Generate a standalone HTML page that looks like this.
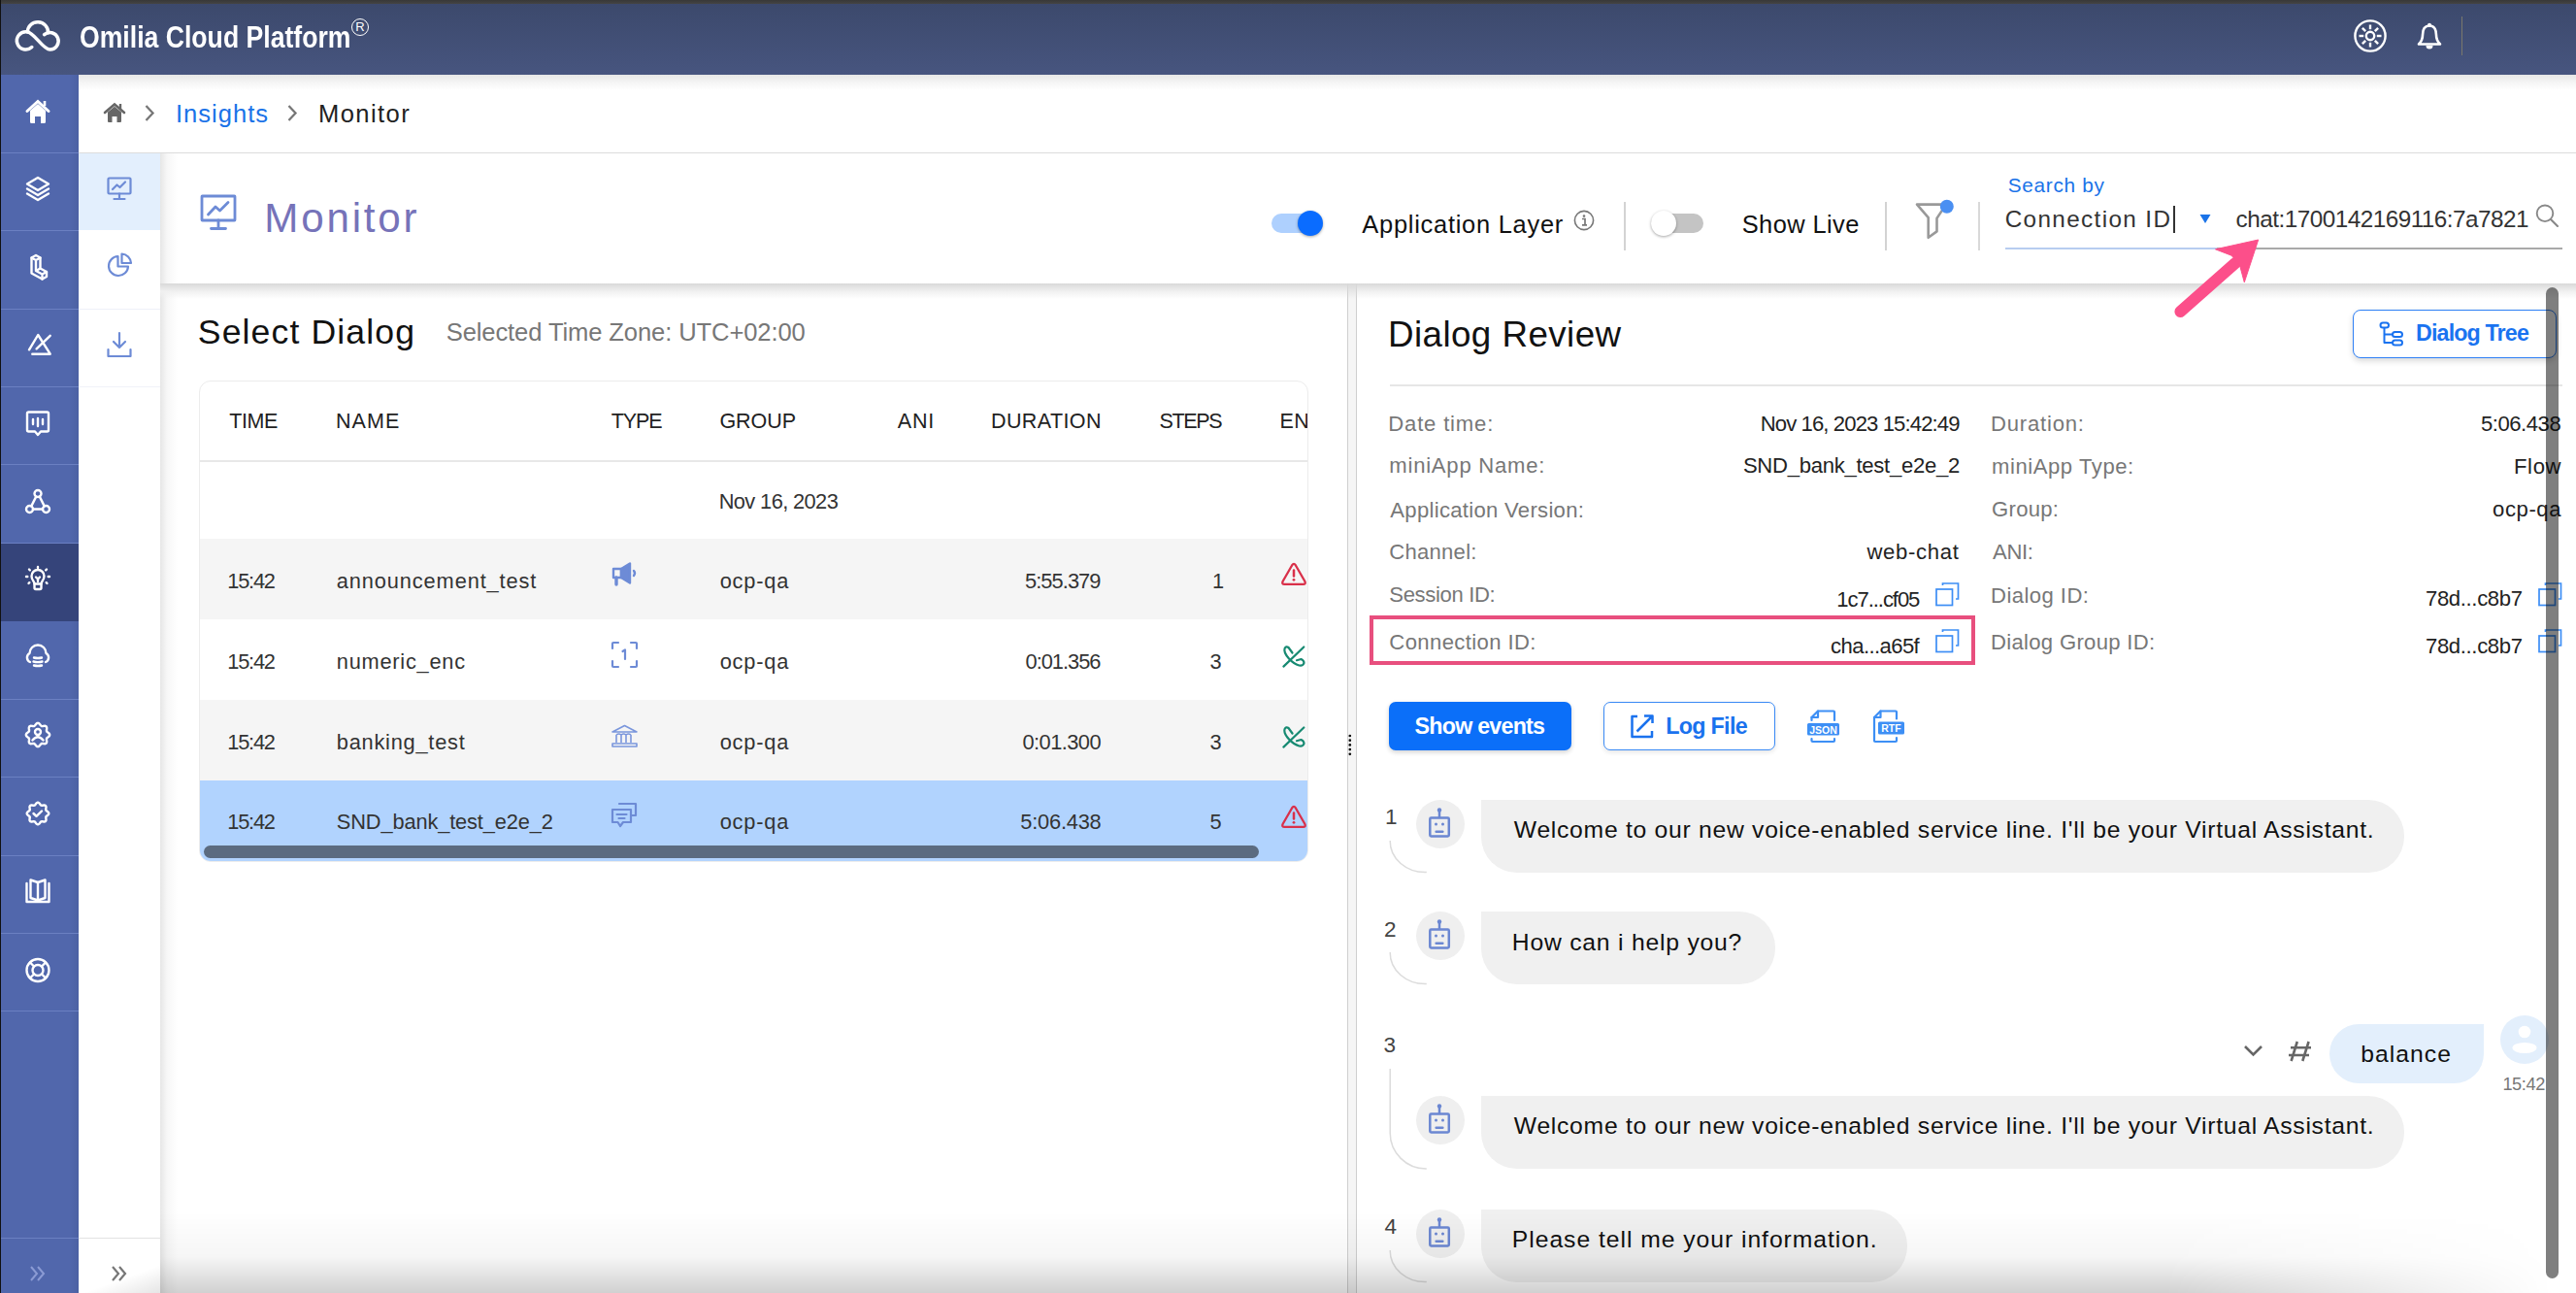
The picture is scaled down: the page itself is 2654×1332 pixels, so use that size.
<!DOCTYPE html>
<html><head><meta charset="utf-8"><title>Omilia Cloud Platform - Monitor</title>
<style>
html,body{margin:0;padding:0;}
body{width:2654px;height:1332px;position:relative;overflow:hidden;background:#fff;font-family:"Liberation Sans",sans-serif;}
.b,.t,.ic{position:absolute;}
.t{white-space:pre;line-height:1;z-index:10}
.ic{z-index:5;overflow:visible}
</style></head><body>
<div class="b" style="left:0;top:0;width:2654px;height:4px;background:linear-gradient(#383838,#444)"></div>
<div class="b" style="left:0;top:4px;width:2654px;height:73px;background:linear-gradient(#3c496c,#47557f)"></div>
<div class="b" style="left:0;top:0;width:1px;height:1332px;background:#111"></div>
<svg class="ic" style="left:0px;top:0px;" width="70" height="60" viewBox="0 0 70 60"><g fill="none" stroke="#fff" stroke-width="3.5" stroke-linecap="round"><path d="M32.8 48.5 A9.15 9.15 0 1 1 27.6 32.75 C 35 32.75, 44 51.05, 51.45 51.05 A8.8 8.8 0 1 0 45.6 35.6"/><path d="M28.3 33 A10.4 10.4 0 0 1 49.6 33.8"/></g></svg>
<div class="t" style="left:362px;top:19px;width:18px;height:18px;border:1.6px solid #fff;border-radius:50%;box-sizing:border-box;color:#fff;font-size:13px;line-height:15px;text-align:center">R</div>
<svg class="ic" style="left:2425px;top:19.5px;" width="34" height="34" viewBox="0 0 34 34"><g fill="none" stroke="#fff" stroke-width="2.4"><circle cx="17" cy="17" r="15.6"/><circle cx="17" cy="17" r="4.2"/><line x1="23.80" y1="17.00" x2="28.50" y2="17.00"/><line x1="21.81" y1="21.81" x2="25.13" y2="25.13"/><line x1="17.00" y1="23.80" x2="17.00" y2="28.50"/><line x1="12.19" y1="21.81" x2="8.87" y2="25.13"/><line x1="10.20" y1="17.00" x2="5.50" y2="17.00"/><line x1="12.19" y1="12.19" x2="8.87" y2="8.87"/><line x1="17.00" y1="10.20" x2="17.00" y2="5.50"/><line x1="21.81" y1="12.19" x2="25.13" y2="8.87"/></g></svg>
<svg class="ic" style="left:2490px;top:23px;" width="26" height="28" viewBox="0 0 26 28"><g fill="none" stroke="#fff" stroke-width="2.6" stroke-linejoin="round"><path d="M13 3.5 C 7 3.5, 6 9, 6 13 C 6 17, 5 19.5, 2 22.5 L 24 22.5 C 21 19.5, 20 17, 20 13 C 20 9, 19 3.5, 13 3.5 Z"/></g><circle cx="13" cy="2.8" r="2" fill="#fff"/><path d="M9.5 24 A3.5 3.5 0 0 0 16.5 24 Z" fill="#fff"/></svg>
<div class="b" style="left:2536px;top:17px;width:1px;height:40px;background:#7a786c"></div>
<div class="b" style="left:1px;top:77px;width:80px;height:1255px;background:linear-gradient(90deg,#5167ac 0,#5167ac 88%,#4c61a3 100%)"></div>
<div class="b" style="left:1px;top:560px;width:80px;height:80px;background:#35447a"></div>
<div class="b" style="left:1px;top:157px;width:80px;height:1px;background:#6b80c2"></div>
<div class="b" style="left:1px;top:237px;width:80px;height:1px;background:#6b80c2"></div>
<div class="b" style="left:1px;top:318px;width:80px;height:1px;background:#6b80c2"></div>
<div class="b" style="left:1px;top:398px;width:80px;height:1px;background:#6b80c2"></div>
<div class="b" style="left:1px;top:478px;width:80px;height:1px;background:#6b80c2"></div>
<div class="b" style="left:1px;top:559px;width:80px;height:1px;background:#6b80c2"></div>
<div class="b" style="left:1px;top:720px;width:80px;height:1px;background:#6b80c2"></div>
<div class="b" style="left:1px;top:800px;width:80px;height:1px;background:#6b80c2"></div>
<div class="b" style="left:1px;top:881px;width:80px;height:1px;background:#6b80c2"></div>
<div class="b" style="left:1px;top:961px;width:80px;height:1px;background:#6b80c2"></div>
<div class="b" style="left:1px;top:1041px;width:80px;height:1px;background:#6b80c2"></div>
<div class="b" style="left:1px;top:1275px;width:80px;height:1px;background:#6b80c2"></div>
<svg class="ic" style="left:26px;top:102px;" width="26" height="26" viewBox="0 0 26 26"><path d="M2 12.5 L13 2.5 L24 12.5" fill="none" stroke="#fff" stroke-width="3" stroke-linecap="round"/><path d="M20 2 L20 7" stroke="#fff" stroke-width="2.6"/><path d="M5 12 L13 5 L21 12 L21 23.5 Q21 25 19.5 25 L16 25 L16 18 L10 18 L10 25 L6.5 25 Q5 25 5 23.5 Z" fill="#fff"/></svg>
<svg class="ic" style="left:26px;top:181px;" width="26" height="26" viewBox="0 0 26 26"><g fill="none" stroke="#fff" stroke-width="2.4" stroke-linecap="round" stroke-linejoin="round"><path d="M13 2 L24 8.5 L13 15 L2 8.5 Z"/><path d="M2 13.5 L13 20 L24 13.5"/><path d="M2 18.5 L13 25 L24 18.5"/></g></svg>
<svg class="ic" style="left:30.5px;top:261.5px;" width="26" height="26" viewBox="0 0 26 26"><g fill="none" stroke="#fff" stroke-width="2.4" stroke-linecap="round" stroke-linejoin="round" stroke-width="2"><path d="M1.5 3.5 L6 1 L10.5 3.5 L10.5 14.5 L17 18 L17 23 L12.5 25.5 L1.5 19.5 Z"/><path d="M1.5 3.5 L6 6 L10.5 3.5 M6 6 L6 17 L12.5 20.5 L17 18 M12.5 20.5 L12.5 25.5 M6 17 L10.5 14.5"/></g></svg>
<svg class="ic" style="left:26px;top:342px;" width="26" height="26" viewBox="0 0 26 26"><g fill="none" stroke="#fff" stroke-width="2.4" stroke-linecap="round" stroke-linejoin="round" stroke-width="2.2"><path d="M4 18.3 L13.2 3 L25.7 22.7 L7.3 22.7"/><path d="M11.6 17.3 L25.7 3.8"/></g></svg>
<svg class="ic" style="left:27px;top:423px;" width="26" height="26" viewBox="0 0 26 26"><g fill="none" stroke="#fff" stroke-width="2.4" stroke-linecap="round" stroke-linejoin="round" stroke-width="2.2"><path d="M2.5 1.5 L21.5 1.5 Q23 1.5 23 3 L23 20 Q23 21.5 21.5 21.5 L15 21.5 L12 25 L9 21.5 L2.5 21.5 Q1 21.5 1 20 L1 3 Q1 1.5 2.5 1.5 Z"/><path d="M7 9 L7 14 M12 8 L12 16 M17 9 L17 14"/></g></svg>
<svg class="ic" style="left:26px;top:504px;" width="26" height="26" viewBox="0 0 26 26"><g fill="none" stroke="#fff" stroke-width="2.4" stroke-linecap="round" stroke-linejoin="round" stroke-width="2.2"><circle cx="13" cy="4.5" r="3.5"/><circle cx="4.5" cy="20.5" r="3.5"/><circle cx="21.5" cy="20.5" r="3.5"/><path d="M11.2 7.6 L6.3 17.4 M14.8 7.6 L19.7 17.4 M8 20.5 L18 20.5"/></g></svg>
<svg class="ic" style="left:26px;top:583px;" width="26" height="26" viewBox="0 0 26 26"><g fill="none" stroke="#fff" stroke-width="2.4" stroke-linecap="round" stroke-linejoin="round" stroke-width="2.2"><path d="M9.5 18.5 C 9.5 16, 6.5 14.5, 6.5 10.5 A6.5 6.5 0 0 1 19.5 10.5 C 19.5 14.5, 16.5 16, 16.5 18.5 Z"/><path d="M9.5 18.5 L9.5 22.5 Q9.5 24 11 24 L15 24 Q16.5 24 16.5 22.5 L16.5 18.5"/><path d="M11 11.5 L13 13.5 L15 11.5 M13 13.5 L13 16"/><path d="M13 1 L13 2 M4 3.5 L4.8 4.3 M22 3.5 L21.2 4.3 M1 11 L2.3 11 M25 11 L23.7 11 M3.5 18 L4.3 17.2 M22.5 18 L21.7 17.2"/></g></svg>
<svg class="ic" style="left:26px;top:665px;" width="26" height="26" viewBox="0 0 26 26"><g fill="none" stroke="#fff" stroke-width="2.4" stroke-linecap="round" stroke-linejoin="round" stroke-width="2.4"><path d="M5 17 A5 5 0 0 1 4.5 8 A8.5 8.5 0 0 1 21.5 8 A5 5 0 0 1 21 17"/><path d="M9 12.5 Q13 13.5 17 12.5 M8.5 16.5 Q13 17.8 17.5 16.5 M9 20.5 Q13 21.5 17 20.5"/></g></svg>
<svg class="ic" style="left:26px;top:744px;" width="26" height="26" viewBox="0 0 26 26"><g fill="none" stroke="#fff" stroke-width="2.4" stroke-linecap="round" stroke-linejoin="round" stroke-width="2.2"><path d="M13.00 0.80 L13.79 0.99 L14.51 1.50 L15.15 2.21 L15.69 2.95 L16.20 3.57 L16.75 3.95 L17.41 4.07 L18.20 3.99 L19.11 3.85 L20.06 3.80 L20.94 3.95 L21.63 4.37 L22.05 5.06 L22.20 5.94 L22.15 6.89 L22.01 7.80 L21.93 8.59 L22.05 9.25 L22.43 9.80 L23.05 10.31 L23.79 10.85 L24.50 11.49 L25.01 12.21 L25.20 13.00 L25.01 13.79 L24.50 14.51 L23.79 15.15 L23.05 15.69 L22.43 16.20 L22.05 16.75 L21.93 17.41 L22.01 18.20 L22.15 19.11 L22.20 20.06 L22.05 20.94 L21.63 21.63 L20.94 22.05 L20.06 22.20 L19.11 22.15 L18.20 22.01 L17.41 21.93 L16.75 22.05 L16.20 22.43 L15.69 23.05 L15.15 23.79 L14.51 24.50 L13.79 25.01 L13.00 25.20 L12.21 25.01 L11.49 24.50 L10.85 23.79 L10.31 23.05 L9.80 22.43 L9.25 22.05 L8.59 21.93 L7.80 22.01 L6.89 22.15 L5.94 22.20 L5.06 22.05 L4.37 21.63 L3.95 20.94 L3.80 20.06 L3.85 19.11 L3.99 18.20 L4.07 17.41 L3.95 16.75 L3.57 16.20 L2.95 15.69 L2.21 15.15 L1.50 14.51 L0.99 13.79 L0.80 13.00 L0.99 12.21 L1.50 11.49 L2.21 10.85 L2.95 10.31 L3.57 9.80 L3.95 9.25 L4.07 8.59 L3.99 7.80 L3.85 6.89 L3.80 5.94 L3.95 5.06 L4.37 4.37 L5.06 3.95 L5.94 3.80 L6.89 3.85 L7.80 3.99 L8.59 4.07 L9.25 3.95 L9.80 3.57 L10.31 2.95 L10.85 2.21 L11.49 1.50 L12.21 0.99 L13.00 0.80 Z"/><circle cx="13" cy="10" r="3"/><path d="M7.5 18.5 Q13 12 18.5 18.5"/></g></svg>
<svg class="ic" style="left:27px;top:826px;" width="26" height="26" viewBox="0 0 26 26"><g fill="none" stroke="#fff" stroke-width="2.4" stroke-linecap="round" stroke-linejoin="round" stroke-width="2.2"><path d="M12.00 0.70 L12.73 0.88 L13.40 1.37 L13.98 2.05 L14.48 2.75 L14.94 3.33 L15.44 3.69 L16.05 3.79 L16.79 3.71 L17.64 3.56 L18.53 3.49 L19.35 3.62 L19.99 4.01 L20.38 4.65 L20.51 5.47 L20.44 6.36 L20.29 7.21 L20.21 7.95 L20.31 8.56 L20.67 9.06 L21.25 9.52 L21.95 10.02 L22.63 10.60 L23.12 11.27 L23.30 12.00 L23.12 12.73 L22.63 13.40 L21.95 13.98 L21.25 14.48 L20.67 14.94 L20.31 15.44 L20.21 16.05 L20.29 16.79 L20.44 17.64 L20.51 18.53 L20.38 19.35 L19.99 19.99 L19.35 20.38 L18.53 20.51 L17.64 20.44 L16.79 20.29 L16.05 20.21 L15.44 20.31 L14.94 20.67 L14.48 21.25 L13.98 21.95 L13.40 22.63 L12.73 23.12 L12.00 23.30 L11.27 23.12 L10.60 22.63 L10.02 21.95 L9.52 21.25 L9.06 20.67 L8.56 20.31 L7.95 20.21 L7.21 20.29 L6.36 20.44 L5.47 20.51 L4.65 20.38 L4.01 19.99 L3.62 19.35 L3.49 18.53 L3.56 17.64 L3.71 16.79 L3.79 16.05 L3.69 15.44 L3.33 14.94 L2.75 14.48 L2.05 13.98 L1.37 13.40 L0.88 12.73 L0.70 12.00 L0.88 11.27 L1.37 10.60 L2.05 10.02 L2.75 9.52 L3.33 9.06 L3.69 8.56 L3.79 7.95 L3.71 7.21 L3.56 6.36 L3.49 5.47 L3.62 4.65 L4.01 4.01 L4.65 3.62 L5.47 3.49 L6.36 3.56 L7.21 3.71 L7.95 3.79 L8.56 3.69 L9.06 3.33 L9.52 2.75 L10.02 2.05 L10.60 1.37 L11.27 0.88 L12.00 0.70 Z"/><path d="M7.5 12 L10.5 14.8 L16 9.5"/></g></svg>
<svg class="ic" style="left:26px;top:905px;" width="26" height="26" viewBox="0 0 26 26"><g fill="none" stroke="#fff" stroke-width="2.4" stroke-linecap="round" stroke-linejoin="round" stroke-width="2.2" stroke-linejoin="miter" stroke-linecap="butt"><path d="M1.5 5 L1.5 24 L24.5 24 L24.5 5"/><path d="M5.5 1.5 L13 4 L20.5 1.5 L20.5 20 L13 22.5 L5.5 20 Z"/><path d="M13 4 L13 22.5"/></g></svg>
<svg class="ic" style="left:26px;top:987px;" width="26" height="26" viewBox="0 0 26 26"><g fill="none" stroke="#fff" stroke-width="2.4" stroke-linecap="round" stroke-linejoin="round" stroke-width="2.2"><circle cx="13" cy="12.5" r="11.5"/><circle cx="13" cy="12.5" r="5.5"/><path d="M5 4.5 L9 8.5 M21 4.5 L17 8.5 M5 20.5 L9 16.5 M21 20.5 L17 16.5"/></g></svg>
<svg class="ic" style="left:30px;top:1303px;" width="18" height="18" viewBox="0 0 18 18"><g fill="none" stroke="#8b9bd4" stroke-width="2"><path d="M2 2 L8 9 L2 16 M9 2 L15 9 L9 16"/></g></svg>
<div class="b" style="left:81px;top:157px;width:84px;height:80px;background:#e3effd"></div>
<div class="b" style="left:81px;top:318px;width:84px;height:1px;background:#eef0f8"></div>
<div class="b" style="left:81px;top:398px;width:84px;height:1px;background:#f0f2f8"></div>
<div class="b" style="left:81px;top:1275px;width:84px;height:1px;background:#e2e2e2"></div>
<svg class="ic" style="left:110px;top:182px;" width="26" height="26" viewBox="0 0 26 26"><g fill="none" stroke="#6d8bd6" stroke-width="2.2" stroke-linecap="round" stroke-linejoin="round"><rect x="1.5" y="1.5" width="23" height="16" rx="1"/><path d="M6 13 L10.5 8.5 L13.5 11 L19 5.5"/><path d="M13 17.5 L13 22 M7.5 23 L18.5 23"/></g></svg>
<svg class="ic" style="left:110px;top:260px;" width="27" height="27" viewBox="0 0 27 27"><g fill="none" stroke="#6d8bd6" stroke-width="2.2" stroke-linecap="round" stroke-linejoin="round"><path d="M11.5 4 A10 10 0 1 0 22 14.5 L11.5 14.5 Z"/><path d="M15.5 1.5 A10 10 0 0 1 25 11 L15.5 11 Z"/></g></svg>
<svg class="ic" style="left:109px;top:341px;" width="28" height="28" viewBox="0 0 28 28"><g fill="none" stroke="#6d8bd6" stroke-width="2.2" stroke-linecap="round" stroke-linejoin="round"><path d="M14 2 L14 17 M8 11 L14 17 L20 11"/><path d="M2.5 19 L2.5 26 L25.5 26 L25.5 19"/></g></svg>
<svg class="ic" style="left:114px;top:1303px;" width="18" height="18" viewBox="0 0 18 18"><g fill="none" stroke="#777" stroke-width="2.2"><path d="M2 2 L8 9 L2 16 M9 2 L15 9 L9 16"/></g></svg>
<div class="b" style="left:81px;top:77px;width:2573px;height:80px;background:linear-gradient(#e6e6e6 0,#f5f5f5 8px,#fff 16px)"></div>
<div class="b" style="left:81px;top:157px;width:2573px;height:1px;background:#dcdcdc"></div>
<svg class="ic" style="left:107px;top:106px;" width="22" height="21" viewBox="0 0 22 21"><path d="M1 10 L11 1.5 L21 10" fill="none" stroke="#666" stroke-width="2.6" stroke-linecap="round"/><path d="M17 1 L17 6" stroke="#666" stroke-width="2.4"/><path d="M4 9.5 L11 3.7 L18 9.5 L18 19 Q18 20 17 20 L13.5 20 L13.5 14 L8.5 14 L8.5 20 L5 20 Q4 20 4 19 Z" fill="#666"/></svg>
<svg class="ic" style="left:148px;top:107px;" width="12" height="19" viewBox="0 0 12 19"><path d="M2.5 2 L9.5 9.5 L2.5 17" fill="none" stroke="#777" stroke-width="2.3"/></svg>
<svg class="ic" style="left:295px;top:107px;" width="12" height="19" viewBox="0 0 12 19"><path d="M2.5 2 L9.5 9.5 L2.5 17" fill="none" stroke="#777" stroke-width="2.3"/></svg>
<div class="b" style="left:165px;top:158px;width:18px;height:1174px;background:linear-gradient(90deg,#e6e6e6,#f7f7f7 40%,rgba(255,255,255,0))"></div>
<div class="b" style="left:165px;top:292px;width:2489px;height:16px;background:linear-gradient(#d9d9d9,#f0f0f0 50%,rgba(255,255,255,0))"></div>
<svg class="ic" style="left:205px;top:199px;" width="40" height="40" viewBox="0 0 40 40"><g fill="none" stroke="#6d8bd6" stroke-width="2.8" stroke-linecap="round" stroke-linejoin="round"><rect x="3" y="3" width="34" height="25" rx="0.5"/><path d="M9.5 22 L17 14 L21.5 18 L30 9.5"/><path d="M20 28 L20 35 M12.5 36.5 L27.5 36.5"/></g></svg>
<div class="b" style="left:1310px;top:220px;width:50px;height:20px;border-radius:10px;background:#aed0fe"></div>
<div class="b" style="left:1337px;top:217px;width:26px;height:26px;border-radius:50%;background:#0a6cff;box-shadow:0 1px 3px rgba(0,0,0,.35)"></div>
<svg class="ic" style="left:1621px;top:216px;" width="22" height="22" viewBox="0 0 22 22"><circle cx="11" cy="11" r="9.6" fill="none" stroke="#777" stroke-width="1.6"/><circle cx="11" cy="6.6" r="1.3" fill="#777"/><path d="M9 9.5 L12 9.5 L12 15.5 M9 15.8 L14 15.8" fill="none" stroke="#777" stroke-width="1.7"/></svg>
<div class="b" style="left:1673px;top:208px;width:2px;height:50px;background:#d3d3d3"></div>
<div class="b" style="left:1701px;top:220px;width:54px;height:20px;border-radius:10px;background:#c4c4c4"></div>
<div class="b" style="left:1701px;top:217px;width:26px;height:26px;border-radius:50%;background:#fff;box-shadow:0 1px 3px rgba(0,0,0,.35)"></div>
<div class="b" style="left:1942px;top:208px;width:2px;height:50px;background:#d3d3d3"></div>
<svg class="ic" style="left:1972px;top:207px;" width="42" height="42" viewBox="0 0 42 42"><path d="M3 3.6 L33 3.6 L23.5 17.9 L23.5 31.4 L14.7 37.8 L14.7 17.1 Z" fill="none" stroke="#999" stroke-width="2.6" stroke-linejoin="round"/><circle cx="33.8" cy="5.7" r="7" fill="#4a8ff2"/></svg>
<div class="b" style="left:2038px;top:208px;width:2px;height:50px;background:#d9d9d9"></div>
<div class="t" style="left:2239px;top:212px;width:2px;height:28px;background:#333"></div>
<svg class="ic" style="left:2266px;top:220px;" width="12" height="11" viewBox="0 0 12 11"><path d="M0.5 1 L11.5 1 L6 10 Z" fill="#1a73e8"/></svg>
<svg class="ic" style="left:2611px;top:209px;" width="28" height="28" viewBox="0 0 28 28"><circle cx="11" cy="10.8" r="8.3" fill="none" stroke="#888" stroke-width="1.9"/><path d="M17 17 L24 24" stroke="#888" stroke-width="2.1" stroke-linecap="round"/></svg>
<div class="b" style="left:2066px;top:255px;width:218px;height:2px;background:#b7cdf0"></div>
<div class="b" style="left:2284px;top:255px;width:356px;height:2px;background:#a9a9a9"></div>
<div class="b" style="left:205px;top:392px;width:1143px;height:496px;border:1.5px solid #ececec;border-radius:12px;box-sizing:border-box;overflow:hidden;background:#fff"><div style="position:absolute;left:0;top:81px;width:100%;height:1.5px;background:#e8e8e8"></div><div style="position:absolute;left:0;top:162px;width:100%;height:83px;background:#f5f5f5"></div><div style="position:absolute;left:0;top:328px;width:100%;height:83px;background:#f5f5f5"></div><div style="position:absolute;left:0;top:411px;width:100%;height:90px;background:#b1d3fe"></div><div style="position:absolute;left:4px;top:478px;width:1087px;height:13px;border-radius:7px;background:#5b6b80"></div></div>
<svg class="ic" style="left:629px;top:578px;" width="30" height="28" viewBox="0 0 30 28"><g fill="none" stroke="#6d8bd6" stroke-width="2.4" stroke-linejoin="round" stroke-linecap="round"><rect x="3" y="8" width="8" height="9"/><path d="M11 8 L20 2.5 L20 22.5 L11 17 Z" fill="#6d8bd6"/><path d="M6 17 L6 24" stroke-width="3.4"/><path d="M24 10 Q26 12.5 24 15"/></g></svg>
<svg class="ic" style="left:629px;top:660px;" width="29" height="29" viewBox="0 0 29 29"><g fill="none" stroke="#6d8bd6" stroke-width="2.2" stroke-linecap="round" stroke-linejoin="round" stroke-width="2.6"><path d="M2 8 L2 3 Q2 2 3 2 L8 2 M21 2 L26 2 Q27 2 27 3 L27 8 M27 21 L27 26 Q27 27 26 27 L21 27 M8 27 L3 27 Q2 27 2 26 L2 21"/><path d="M12.5 11 L15 9.5 L15 19"/></g></svg>
<svg class="ic" style="left:629px;top:746px;" width="29" height="25" viewBox="0 0 29 25"><g fill="none" stroke="#7a96dc" stroke-width="1.6" stroke-linejoin="round"><path d="M2 8 L14.5 1.5 L27 8 Z"/><path d="M6 11 L6 19 M11 11 L11 19 M16 11 L16 19 M21 11 L21 19 M6 11 Q8.5 9 11 11 M16 11 Q18.5 9 21 11 M11 11 Q13.5 9 16 11"/><path d="M2 20 L27 20 L27 23 L2 23 Z"/></g></svg>
<svg class="ic" style="left:629px;top:826px;" width="29" height="28" viewBox="0 0 29 28"><g fill="none" stroke="#6d8bd6" stroke-width="2.2" stroke-linecap="round" stroke-linejoin="round"><path d="M9 2 L26 2 L26 14 L22 14"/><path d="M2 8 L21 8 L21 21 L13 21 L10 25 L7.5 21 L2 21 Z"/><path d="M6.5 13 L16.5 13 M8.5 17 L14.5 17"/></g></svg>
<svg class="ic" style="left:1320px;top:579px;" width="26" height="25" viewBox="0 0 26 25"><path d="M11.2 3.2 Q13 0.5 14.8 3.2 L24.3 19.8 Q25.8 22.8 22.5 22.8 L3.5 22.8 Q0.2 22.8 1.7 19.8 Z" fill="none" stroke="#d9304a" stroke-width="2.3" stroke-linejoin="round"/><path d="M13 8.5 L13 14.5" stroke="#d9304a" stroke-width="2.5" stroke-linecap="round"/><circle cx="13" cy="18.3" r="1.4" fill="#d9304a"/></svg>
<svg class="ic" style="left:1320px;top:829px;" width="26" height="25" viewBox="0 0 26 25"><path d="M11.2 3.2 Q13 0.5 14.8 3.2 L24.3 19.8 Q25.8 22.8 22.5 22.8 L3.5 22.8 Q0.2 22.8 1.7 19.8 Z" fill="none" stroke="#d9304a" stroke-width="2.3" stroke-linejoin="round"/><path d="M13 8.5 L13 14.5" stroke="#d9304a" stroke-width="2.5" stroke-linecap="round"/><circle cx="13" cy="18.3" r="1.4" fill="#d9304a"/></svg>
<svg class="ic" style="left:1321px;top:664px;" width="25" height="24" viewBox="0 0 25 24"><g fill="none" stroke="#178a72" stroke-width="2.2" stroke-linecap="round" stroke-linejoin="round"><path d="M1.4 22.6 L22.3 2.5"/><path d="M10.5 8.5 L 6.5 3 Q 4 1.2 2.6 4 Q 1.2 8 7 14.5 Q 12 20 17.5 21.5 Q 21.5 22.2 22.5 19 Q 22.6 16.5 19.5 15 L 15 16.2"/></g></svg>
<svg class="ic" style="left:1321px;top:747px;" width="25" height="24" viewBox="0 0 25 24"><g fill="none" stroke="#178a72" stroke-width="2.2" stroke-linecap="round" stroke-linejoin="round"><path d="M1.4 22.6 L22.3 2.5"/><path d="M10.5 8.5 L 6.5 3 Q 4 1.2 2.6 4 Q 1.2 8 7 14.5 Q 12 20 17.5 21.5 Q 21.5 22.2 22.5 19 Q 22.6 16.5 19.5 15 L 15 16.2"/></g></svg>
<div class="b" style="left:1388px;top:292px;width:10px;height:1040px;background:#f5f5f5;border-left:1px solid #cfcfcf;border-right:1px solid #cfcfcf;box-sizing:border-box"></div>
<div class="b" style="left:1388px;top:292px;width:10px;height:16px;background:linear-gradient(#d9d9d9,rgba(245,245,245,0))"></div>
<svg class="ic" style="left:1388px;top:754px;z-index:20" width="6" height="28" viewBox="0 0 6 28"><g fill="#111"><circle cx="2.8" cy="4" r="1.35"/><circle cx="2.8" cy="8.7" r="1.35"/><circle cx="2.8" cy="13.4" r="1.35"/><circle cx="2.8" cy="18.1" r="1.35"/><circle cx="2.8" cy="22.8" r="1.35"/></g></svg>
<div class="b" style="left:1432px;top:396px;width:1208px;height:1.5px;background:#e6e6e6"></div>
<div class="b" style="left:2424px;top:319px;width:210px;height:50px;border:1.8px solid #2f80f5;border-radius:8px;box-sizing:border-box;box-shadow:0 3px 6px rgba(0,0,0,.15);background:#fff"></div>
<svg class="ic" style="left:2451px;top:331px;" width="27" height="26" viewBox="0 0 27 26"><g fill="none" stroke="#1a73f0" stroke-width="2" stroke-linejoin="round"><rect x="1.5" y="1.5" width="8.5" height="5" rx="2.5"/><rect x="14" y="11" width="10" height="5" rx="2.5"/><rect x="14" y="19.5" width="10" height="5" rx="2.5"/><path d="M5.5 6.5 L5.5 22 L14 22 M5.5 13.5 L14 13.5"/></g></svg>
<svg class="ic" style="left:1994px;top:600px;" width="25" height="25" viewBox="0 0 25 25"><g fill="none" stroke="#3d8ef5" stroke-width="1.7"><rect x="1" y="7" width="16.5" height="16.5"/><path d="M7.5 3 L7.5 1 L23.5 1 L23.5 17 L21 17"/></g></svg>
<svg class="ic" style="left:1994px;top:648px;" width="25" height="25" viewBox="0 0 25 25"><g fill="none" stroke="#3d8ef5" stroke-width="1.7"><rect x="1" y="7" width="16.5" height="16.5"/><path d="M7.5 3 L7.5 1 L23.5 1 L23.5 17 L21 17"/></g></svg>
<svg class="ic" style="left:2615px;top:600px;" width="25" height="25" viewBox="0 0 25 25"><g fill="none" stroke="#3d8ef5" stroke-width="1.7"><rect x="1" y="7" width="16.5" height="16.5"/><path d="M7.5 3 L7.5 1 L23.5 1 L23.5 17 L21 17"/></g></svg>
<svg class="ic" style="left:2615px;top:648px;" width="25" height="25" viewBox="0 0 25 25"><g fill="none" stroke="#3d8ef5" stroke-width="1.7"><rect x="1" y="7" width="16.5" height="16.5"/><path d="M7.5 3 L7.5 1 L23.5 1 L23.5 17 L21 17"/></g></svg>
<div class="b" style="left:1411px;top:634px;width:624px;height:51px;border:4.8px solid #e84f7e;box-sizing:border-box"></div>
<div class="b" style="left:1431px;top:723px;width:188px;height:50px;border-radius:7px;background:#0b6ff9;box-shadow:0 2px 5px rgba(0,0,0,.18)"></div>
<div class="b" style="left:1652px;top:723px;width:177px;height:50px;border-radius:7px;border:1.6px solid #3a8af5;box-sizing:border-box;box-shadow:0 2px 5px rgba(0,0,0,.10);background:#fff"></div>
<svg class="ic" style="left:1678.5px;top:735.5px;" width="27" height="26" viewBox="0 0 27 26"><g fill="none" stroke="#1a72ee" stroke-width="2.5" stroke-linejoin="round"><path d="M8 2 L2.5 2 L2.5 23 L23 23 L23 17"/><path d="M15 1.5 L23.5 1.5 L23.5 9 M23 2 L7.5 17.5"/></g></svg>
<svg class="ic" style="left:1861px;top:731px;" width="35" height="35" viewBox="0 0 35 35"><g fill="none" stroke="#3d8ff5" stroke-width="2.2" stroke-linejoin="round" stroke-linecap="round"><path d="M5.5 11 L5.5 8 L12 1.5 L28 1.5 Q29 1.5 29 2.5 L29 11 M29 30 L29 32 Q29 33 28 33 L6.5 33 Q5.5 33 5.5 32 L5.5 30"/><path d="M12 1.5 L12 8 L5.5 8"/></g><rect x="1" y="14" width="33" height="12.5" rx="1.5" fill="#3d8ff5"/><text x="17.5" y="24.5" font-family="Liberation Sans" font-weight="700" font-size="10.5" fill="#fff" text-anchor="middle">JSON</text></svg>
<svg class="ic" style="left:1929px;top:731px;" width="35" height="35" viewBox="0 0 35 35"><g fill="none" stroke="#3d8ff5" stroke-width="2.2" stroke-linejoin="round" stroke-linecap="round"><path d="M2 32 L2 8 L8.5 1.5 L24 1.5 Q25 1.5 25 2.5 L25 9.5 M25 29 L25 32 Q25 33 24 33 L3 33 Q2 33 2 32"/><path d="M8.5 1.5 L8.5 8 L2 8"/></g><rect x="6" y="12.5" width="27" height="13" rx="1.5" fill="#3d8ff5"/><text x="19.5" y="23.2" font-family="Liberation Sans" font-weight="700" font-size="10.5" fill="#fff" text-anchor="middle">RTF</text></svg>
<svg class="ic" style="left:1458.5px;top:823.7px;" width="50" height="50" viewBox="0 0 50 50"><circle cx="25" cy="25" r="25" fill="#efefef"/><g fill="none" stroke="#6b87d2" stroke-width="2.5" stroke-linejoin="round"><rect x="14.3" y="18.5" width="19.5" height="19" rx="1.2"/><path d="M24 18 L24 11"/></g><g fill="#6b87d2"><circle cx="24" cy="10.5" r="2.2"/><circle cx="20.5" cy="25" r="1.5"/><circle cx="27.5" cy="25" r="1.5"/><rect x="19.4" y="31.4" width="9.2" height="2.6" rx="1.3"/></g></svg>
<div class="b" style="left:1526px;top:823.7px;width:951px;height:75px;background:#f0f0f0;border-radius:0 37px 37px 37px"></div>
<svg class="ic" style="left:1458.5px;top:939px;" width="50" height="50" viewBox="0 0 50 50"><circle cx="25" cy="25" r="25" fill="#efefef"/><g fill="none" stroke="#6b87d2" stroke-width="2.5" stroke-linejoin="round"><rect x="14.3" y="18.5" width="19.5" height="19" rx="1.2"/><path d="M24 18 L24 11"/></g><g fill="#6b87d2"><circle cx="24" cy="10.5" r="2.2"/><circle cx="20.5" cy="25" r="1.5"/><circle cx="27.5" cy="25" r="1.5"/><rect x="19.4" y="31.4" width="9.2" height="2.6" rx="1.3"/></g></svg>
<div class="b" style="left:1526px;top:939px;width:303px;height:75px;background:#f0f0f0;border-radius:0 37px 37px 37px"></div>
<svg class="ic" style="left:1458.5px;top:1129.2px;" width="50" height="50" viewBox="0 0 50 50"><circle cx="25" cy="25" r="25" fill="#efefef"/><g fill="none" stroke="#6b87d2" stroke-width="2.5" stroke-linejoin="round"><rect x="14.3" y="18.5" width="19.5" height="19" rx="1.2"/><path d="M24 18 L24 11"/></g><g fill="#6b87d2"><circle cx="24" cy="10.5" r="2.2"/><circle cx="20.5" cy="25" r="1.5"/><circle cx="27.5" cy="25" r="1.5"/><rect x="19.4" y="31.4" width="9.2" height="2.6" rx="1.3"/></g></svg>
<div class="b" style="left:1526px;top:1129.2px;width:951px;height:75px;background:#f0f0f0;border-radius:0 37px 37px 37px"></div>
<svg class="ic" style="left:1458.5px;top:1246px;" width="50" height="50" viewBox="0 0 50 50"><circle cx="25" cy="25" r="25" fill="#efefef"/><g fill="none" stroke="#6b87d2" stroke-width="2.5" stroke-linejoin="round"><rect x="14.3" y="18.5" width="19.5" height="19" rx="1.2"/><path d="M24 18 L24 11"/></g><g fill="#6b87d2"><circle cx="24" cy="10.5" r="2.2"/><circle cx="20.5" cy="25" r="1.5"/><circle cx="27.5" cy="25" r="1.5"/><rect x="19.4" y="31.4" width="9.2" height="2.6" rx="1.3"/></g></svg>
<div class="b" style="left:1526px;top:1246px;width:439px;height:75px;background:#f0f0f0;border-radius:0 37px 37px 37px"></div>
<svg class="ic" style="left:1430px;top:864.5px;" width="42" height="36" viewBox="0 0 42 36"><path d="M2.2 1 A 36 32 0 0 0 39.8 33.5" fill="none" stroke="#dcdcdc" stroke-width="1.5"/></svg>
<svg class="ic" style="left:1430px;top:980px;" width="42" height="36" viewBox="0 0 42 36"><path d="M2.2 1 A 36 32 0 0 0 39.8 33.5" fill="none" stroke="#dcdcdc" stroke-width="1.5"/></svg>
<svg class="ic" style="left:1430px;top:1287px;" width="42" height="36" viewBox="0 0 42 36"><path d="M2.2 1 A 36 32 0 0 0 39.8 33.5" fill="none" stroke="#dcdcdc" stroke-width="1.5"/></svg>
<svg class="ic" style="left:1430px;top:1100px;" width="42" height="106" viewBox="0 0 42 106"><path d="M2.2 1 L2.2 67 A 37 37 0 0 0 39.8 104" fill="none" stroke="#dcdcdc" stroke-width="1.5"/></svg>
<div class="b" style="left:2400px;top:1054.6px;width:159px;height:61.4px;background:#e3effc;border-radius:31px 0 31px 31px"></div>
<svg class="ic" style="left:2575px;top:1046px;" width="52" height="52" viewBox="0 0 52 52"><circle cx="26" cy="25" r="25" fill="#e3effc"/><circle cx="26" cy="17" r="6.3" fill="#fff"/><ellipse cx="26" cy="33.5" rx="12.5" ry="5.5" fill="#fff"/></svg>
<svg class="ic" style="left:2311px;top:1076px;" width="21" height="13" viewBox="0 0 21 13"><path d="M2 2 L10.5 10.5 L19 2" fill="none" stroke="#666" stroke-width="2.6"/></svg>
<svg class="ic" style="left:2356px;top:1070px;" width="28" height="26" viewBox="0 0 28 26"><g stroke="#666" stroke-width="2.6" fill="none"><path d="M10.8 3 L4.6 23 M22.6 3 L16.3 23 M4 9.2 L25 9.2 M2 17 L23 17"/></g></svg>
<div class="b" style="left:2623px;top:296px;width:13px;height:1021px;border-radius:7px;background:rgba(0,0,0,.5);z-index:60"></div>
<svg class="ic" style="left:2230px;top:240px;z-index:30" width="110" height="90" viewBox="0 0 110 90"><path d="M16.4 81 L73 31" stroke="#fc4f8a" stroke-width="12" stroke-linecap="round"/><path d="M96.7 7 L52.5 16.8 L69.1 23.2 L77.6 33.4 L82.3 50.8 Z" fill="#fc4f8a" stroke="#fc4f8a" stroke-width="1" stroke-linejoin="round"/></svg>
<div class="b" style="left:165px;top:1248px;width:2489px;height:84px;background:linear-gradient(rgba(0,0,0,0),rgba(0,0,0,.035) 55%,rgba(0,0,0,.18));z-index:50;-webkit-mask-image:linear-gradient(90deg,#000 83%,transparent 99%);mask-image:linear-gradient(90deg,#000 83%,transparent 99%)"></div>
<div class="b" style="left:81px;top:1290px;width:84px;height:42px;background:linear-gradient(160deg,rgba(0,0,0,0) 60%,rgba(0,0,0,.10));z-index:50"></div>
<div class="t" style="left:81.5px;top:22.5px;font-size:31.25px;color:#fff;letter-spacing:0.00px;font-weight:700;transform:scaleX(0.8517);transform-origin:0 0">Omilia Cloud Platform</div>
<div class="t" style="left:181.0px;top:104.7px;font-size:25.58px;color:#1a73e8;letter-spacing:0.98px">Insights</div>
<div class="t" style="left:328.0px;top:104.7px;font-size:25.58px;color:#222;letter-spacing:1.41px">Monitor</div>
<div class="t" style="left:272.3px;top:204.2px;font-size:42.15px;color:#7673b9;letter-spacing:2.80px">Monitor</div>
<div class="t" style="left:1403.3px;top:218.7px;font-size:25.44px;color:#111;letter-spacing:0.74px">Application Layer</div>
<div class="t" style="left:1794.7px;top:218.7px;font-size:25.44px;color:#111;letter-spacing:0.42px">Show Live</div>
<div class="t" style="left:2068.8px;top:181.4px;font-size:20.78px;color:#1a73e8;letter-spacing:0.70px">Search by</div>
<div class="t" style="left:2065.7px;top:214.4px;font-size:24.27px;color:#333;letter-spacing:1.38px">Connection ID</div>
<div class="t" style="left:2303.6px;top:214.4px;font-size:24.27px;color:#333;letter-spacing:-0.50px;width:301px;overflow:hidden">chat:1700142169116:7a7821:</div>
<div class="t" style="left:203.8px;top:325.1px;font-size:35.61px;color:#111;letter-spacing:1.11px">Select Dialog</div>
<div class="t" style="left:459.7px;top:329.5px;font-size:25.58px;color:#777;letter-spacing:-0.11px">Selected Time Zone: UTC+02:00</div>
<div class="t" style="left:236.2px;top:424.1px;font-size:21.51px;color:#222;letter-spacing:-0.42px">TIME</div>
<div class="t" style="left:345.9px;top:424.1px;font-size:21.51px;color:#222;letter-spacing:1.12px">NAME</div>
<div class="t" style="left:629.7px;top:424.1px;font-size:21.51px;color:#222;letter-spacing:-1.12px">TYPE</div>
<div class="t" style="left:741.4px;top:424.1px;font-size:21.51px;color:#222;letter-spacing:-0.05px">GROUP</div>
<div class="t" style="left:924.8px;top:424.1px;font-size:21.51px;color:#222;letter-spacing:0.78px">ANI</div>
<div class="t" style="left:1021.0px;top:424.1px;font-size:21.51px;color:#222;letter-spacing:0.40px">DURATION</div>
<div class="t" style="left:1194.4px;top:424.1px;font-size:21.51px;color:#222;letter-spacing:-1.31px">STEPS</div>
<div class="t" style="left:1318.4px;top:424.1px;font-size:21.51px;color:#222;letter-spacing:0.60px;width:29px;overflow:hidden">EN</div>
<div class="t" style="left:740.7px;top:505.5px;font-size:21.8px;color:#333;letter-spacing:-0.60px">Nov 16, 2023</div>
<div class="t" style="left:234.3px;top:587.5px;font-size:21.8px;color:#333;letter-spacing:-1.24px">15:42</div>
<div class="t" style="left:346.8px;top:587.5px;font-size:21.8px;color:#333;letter-spacing:0.88px">announcement_test</div>
<div class="t" style="left:741.7px;top:587.5px;font-size:21.8px;color:#333;letter-spacing:0.81px">ocp-qa</div>
<div class="t" style="left:1056.0px;top:587.5px;font-size:21.8px;color:#333;letter-spacing:-0.92px">5:55.379</div>
<div class="t" style="left:1248.9px;top:587.5px;font-size:21.8px;color:#333;letter-spacing:0.00px">1</div>
<div class="t" style="left:234.3px;top:670.8px;font-size:21.8px;color:#333;letter-spacing:-1.24px">15:42</div>
<div class="t" style="left:346.8px;top:670.8px;font-size:21.8px;color:#333;letter-spacing:0.75px">numeric_enc</div>
<div class="t" style="left:741.7px;top:670.8px;font-size:21.8px;color:#333;letter-spacing:0.81px">ocp-qa</div>
<div class="t" style="left:1056.5px;top:670.8px;font-size:21.8px;color:#333;letter-spacing:-0.99px">0:01.356</div>
<div class="t" style="left:1246.6px;top:670.8px;font-size:21.8px;color:#333;letter-spacing:0.00px">3</div>
<div class="t" style="left:234.3px;top:753.5px;font-size:21.8px;color:#333;letter-spacing:-1.24px">15:42</div>
<div class="t" style="left:346.8px;top:753.5px;font-size:21.8px;color:#333;letter-spacing:0.76px">banking_test</div>
<div class="t" style="left:741.7px;top:753.5px;font-size:21.8px;color:#333;letter-spacing:0.81px">ocp-qa</div>
<div class="t" style="left:1053.4px;top:753.5px;font-size:21.8px;color:#333;letter-spacing:-0.52px">0:01.300</div>
<div class="t" style="left:1246.6px;top:753.5px;font-size:21.8px;color:#333;letter-spacing:0.00px">3</div>
<div class="t" style="left:234.3px;top:836.2px;font-size:21.8px;color:#333;letter-spacing:-1.24px">15:42</div>
<div class="t" style="left:346.8px;top:836.2px;font-size:21.8px;color:#333;letter-spacing:-0.13px">SND_bank_test_e2e_2</div>
<div class="t" style="left:741.7px;top:836.2px;font-size:21.8px;color:#333;letter-spacing:0.81px">ocp-qa</div>
<div class="t" style="left:1051.3px;top:836.2px;font-size:21.8px;color:#333;letter-spacing:-0.20px">5:06.438</div>
<div class="t" style="left:1246.6px;top:836.2px;font-size:21.8px;color:#333;letter-spacing:0.00px">5</div>
<div class="t" style="left:1429.9px;top:326.8px;font-size:36.77px;color:#111;letter-spacing:0.44px">Dialog Review</div>
<div class="t" style="left:1430.3px;top:425.9px;font-size:22.09px;color:#777;letter-spacing:0.82px">Date time:</div>
<div class="t" style="left:1813.7px;top:425.9px;font-size:22.09px;color:#222;letter-spacing:-0.88px">Nov 16, 2023 15:42:49</div>
<div class="t" style="left:1431.3px;top:469.2px;font-size:22.09px;color:#777;letter-spacing:0.77px">miniApp Name:</div>
<div class="t" style="left:1795.9px;top:469.2px;font-size:22.09px;color:#222;letter-spacing:-0.28px">SND_bank_test_e2e_2</div>
<div class="t" style="left:1432.3px;top:514.7px;font-size:22.09px;color:#777;letter-spacing:0.30px">Application Version:</div>
<div class="t" style="left:1431.3px;top:558.0px;font-size:22.09px;color:#777;letter-spacing:0.25px">Channel:</div>
<div class="t" style="left:1923.5px;top:558.0px;font-size:22.09px;color:#222;letter-spacing:0.68px">web-chat</div>
<div class="t" style="left:1431.3px;top:602.3px;font-size:22.09px;color:#777;letter-spacing:-0.35px">Session ID:</div>
<div class="t" style="left:1892.3px;top:606.5px;font-size:22.09px;color:#222;letter-spacing:-1.07px">1c7...cf05</div>
<div class="t" style="left:1431.3px;top:650.7px;font-size:22.09px;color:#777;letter-spacing:0.39px">Connection ID:</div>
<div class="t" style="left:1886.1px;top:654.9px;font-size:22.09px;color:#222;letter-spacing:-0.59px">cha...a65f</div>
<div class="t" style="left:2051.0px;top:425.9px;font-size:22.09px;color:#777;letter-spacing:0.80px">Duration:</div>
<div class="t" style="left:2555.9px;top:425.9px;font-size:22.09px;color:#222;letter-spacing:-0.45px">5:06.438</div>
<div class="t" style="left:2052.0px;top:469.5px;font-size:22.09px;color:#777;letter-spacing:0.56px">miniApp Type:</div>
<div class="t" style="left:2590.0px;top:469.5px;font-size:22.09px;color:#222;letter-spacing:0.63px">Flow</div>
<div class="t" style="left:2052.0px;top:514.3px;font-size:22.09px;color:#777;letter-spacing:0.30px">Group:</div>
<div class="t" style="left:2568.0px;top:514.3px;font-size:22.09px;color:#222;letter-spacing:0.60px">ocp-qa</div>
<div class="t" style="left:2053.0px;top:557.9px;font-size:22.09px;color:#777;letter-spacing:-0.31px">ANI:</div>
<div class="t" style="left:2051.0px;top:602.7px;font-size:22.09px;color:#777;letter-spacing:0.45px">Dialog ID:</div>
<div class="t" style="left:2499.0px;top:606.3px;font-size:22.09px;color:#222;letter-spacing:-0.35px">78d...c8b7</div>
<div class="t" style="left:2051.0px;top:650.7px;font-size:22.09px;color:#777;letter-spacing:0.31px">Dialog Group ID:</div>
<div class="t" style="left:2499.0px;top:654.8px;font-size:22.09px;color:#222;letter-spacing:-0.35px">78d...c8b7</div>
<div class="t" style="left:1457.5px;top:736.9px;font-size:23.26px;color:#fff;letter-spacing:-0.76px;font-weight:700">Show events</div>
<div class="t" style="left:1716.2px;top:736.9px;font-size:23.26px;color:#1a72ee;letter-spacing:-0.67px;font-weight:700">Log File</div>
<div class="t" style="left:2489.0px;top:332.1px;font-size:23.26px;color:#1a73f0;letter-spacing:-0.85px;font-weight:700">Dialog Tree</div>
<div class="t" style="left:1427.0px;top:830.7px;font-size:22.53px;color:#444;letter-spacing:0.00px">1</div>
<div class="t" style="left:1426.0px;top:946.8px;font-size:22.53px;color:#444;letter-spacing:0.00px">2</div>
<div class="t" style="left:1425.6px;top:1065.7px;font-size:22.53px;color:#444;letter-spacing:0.00px">3</div>
<div class="t" style="left:1426.6px;top:1252.9px;font-size:22.53px;color:#444;letter-spacing:0.00px">4</div>
<div class="t" style="left:1559.8px;top:842.8px;font-size:24.71px;color:#111;letter-spacing:0.72px">Welcome to our new voice-enabled service line. I&#x27;ll be your Virtual Assistant.</div>
<div class="t" style="left:1557.8px;top:958.6px;font-size:24.71px;color:#111;letter-spacing:0.78px">How can i help you?</div>
<div class="t" style="left:2432.3px;top:1074.1px;font-size:24.71px;color:#111;letter-spacing:1.01px">balance</div>
<div class="t" style="left:2578.4px;top:1107.9px;font-size:18.17px;color:#777;letter-spacing:-0.39px">15:42</div>
<div class="t" style="left:1559.8px;top:1148.3px;font-size:24.71px;color:#111;letter-spacing:0.72px">Welcome to our new voice-enabled service line. I&#x27;ll be your Virtual Assistant.</div>
<div class="t" style="left:1557.8px;top:1265.1px;font-size:24.71px;color:#111;letter-spacing:0.96px">Please tell me your information.</div>
</body></html>
